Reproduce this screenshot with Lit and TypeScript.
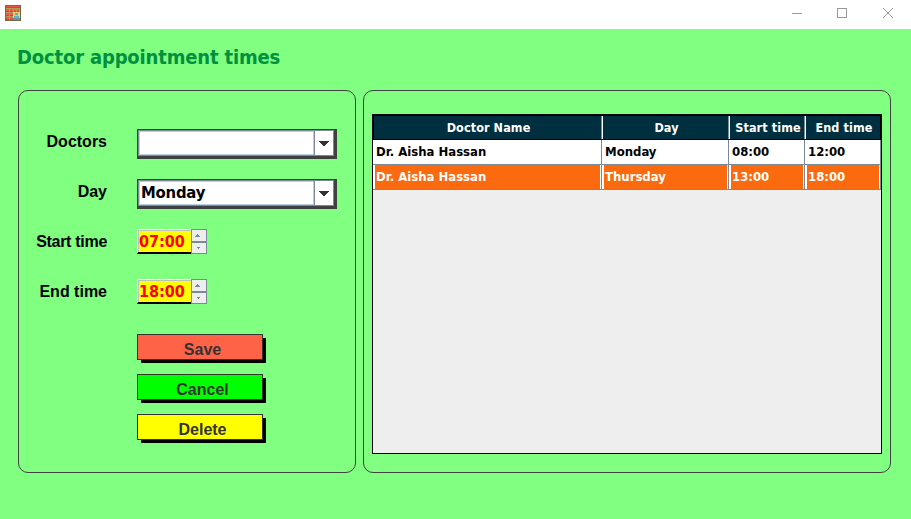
import { LitElement, html, css, svg } from "lit";
import { customElement, property } from "lit/decorators.js";
import { classMap } from "lit/directives/class-map.js";

@customElement("combo-box")
class ComboBox extends LitElement {
  @property() value = "";
  static styles = css`
    :host { display: block; box-sizing: border-box; width: 200px; height: 30px; border: solid #404040; border-width: 1px 3px 3px 1px; }
    .box { box-sizing: border-box; height: 26px; border: 1px solid #7a8a99; display: grid; grid-template-columns: 175px 19px; background: #fff; }
    .value { box-sizing: border-box; height: 24px; border: 1px solid #b8cfe5; padding-left: 1px; font: bold 16.5px/22px "DejaVu Sans Condensed", "DejaVu Sans", sans-serif; font-stretch: condensed; color: #000; letter-spacing: -0.2px; }
    .drop { border-left: 1px solid #7a8a99; display: flex; align-items: center; justify-content: center; }
    svg { display: block; }
  `;
  render() {
    return html`<div class="box"><div class="value">${this.value}</div>
      <div class="drop"><svg width="10" height="5" shape-rendering="crispEdges"><path d="M0 0H10V1H9V2H8V3H7V4H6V5H4V4H3V3H2V2H1V1H0Z" fill="#333" /></svg></div></div>`;
  }
}

@customElement("time-spinner")
class TimeSpinner extends LitElement {
  @property() value = "";
  static styles = css`
    :host { display: grid; grid-template-columns: 54px 16px; width: 70px; height: 25px; }
    .field { box-sizing: border-box; height: 25px; border-top: 1px solid #fff; border-left: 1px solid #fff; border-bottom: 2px solid #000; background: #ff0; }
    .text { box-sizing: border-box; height: 22px; border-top: 1px solid #c0c0c0; border-left: 1px solid #c0c0c0; font: bold 16px/21px "DejaVu Sans Condensed", "DejaVu Sans", sans-serif; font-stretch: condensed; color: #f00; white-space: nowrap; }
    .steps { display: grid; grid-template-rows: 13px 12px; }
    .step { box-sizing: border-box; border: 1px solid #7a8a99; background: #eee; display: flex; align-items: center; padding-left: 3px; }
    svg { display: block; }
  `;
  render() {
    return html`<div class="field"><div class="text">${this.value}</div></div>
      <div class="steps">
        <div class="step"><svg width="5" height="3" shape-rendering="crispEdges"><path d="M2 0H3V1H4V2H5V3H0V2H1V1H2Z" fill="#7a8a99" /></svg></div>
        <div class="step"><svg width="5" height="2" shape-rendering="crispEdges"><path d="M2 0H5V1H4V2H3V1H2Z" fill="#7a8a99" /></svg></div>
      </div>`;
  }
}

const rows = [
  ["Dr. Aisha Hassan", "Monday", "08:00", "12:00"],
  ["Dr. Aisha Hassan", "Thursday", "13:00", "18:00"],
];
const headings = ["Doctor Name", "Day", "Start time", "End time"];
const windows = [
  [1, 4], [5, 4], [9, 4], [12, 4],
  [1, 8], [5, 8],
  [1, 12], [5, 12],
];

@customElement("app-root")
class AppRoot extends LitElement {
  static styles = css`
    :host { display: block; width: 911px; height: 519px; overflow: hidden; background: #80ff80; color: #000; }
    .bar { height: 29px; background: #fff; display: flex; align-items: flex-start; justify-content: space-between; }
    .logo { display: block; margin: 5px 0 0 5px; }
    .controls { display: block; margin: 8px 18px 0 0; }
    .title { height: 61px; box-sizing: border-box; padding: 14px 0 0 17px; font: bold 20px/28px "DejaVu Sans Condensed", "DejaVu Sans", sans-serif; font-stretch: condensed; color: #009040; white-space: nowrap; letter-spacing: -0.16px; }
    .panels { display: grid; grid-template-columns: 338px 528px; gap: 7px; margin-left: 18px; height: 383px; }
    .panel { box-sizing: border-box; border: 1px solid #404040; border-radius: 10px; }
    .form { padding-top: 38px; display: grid; grid-template-columns: 88px 200px; column-gap: 30px; grid-template-rows: repeat(4, 50px) auto; align-items: start; }
    .label { font: bold 16px/26px "Liberation Sans", Arial, sans-serif; text-align: right; white-space: nowrap; }
    .label.tight { letter-spacing: -0.3px; }
    .actions { grid-column: 2; padding-top: 5px; display: grid; gap: 11px; }
    .shadow { width: 129px; height: 29px; background: linear-gradient(#000, #000) 4px 4px / 125px 25px no-repeat; }
    .button { box-sizing: border-box; width: 126px; height: 26px; border: 1px solid #333; padding-left: 5px; text-align: center; font: bold 16px/29px "Liberation Sans", Arial, sans-serif; color: #333; }
    .save { background: #ff6347; }
    .cancel { background: #0f0; }
    .delete { background: #ff0; }
    .list { padding: 23px 0 0 8px; }
    .table { box-sizing: border-box; width: 510px; height: 340px; border: 1px solid #000; background: #eee; font: bold 13px/24px "DejaVu Sans Condensed", "DejaVu Sans", sans-serif; font-stretch: condensed; white-space: nowrap; }
    .row { display: grid; grid-template-columns: 229px 127px 76px 76px; }
    .head { box-sizing: border-box; height: 25px; border: solid #000; border-width: 1px; grid-template-columns: 228px 127px 76px 75px; background: #003040; color: #fff; font-size: 12.5px; line-height: 24px; letter-spacing: 0.1px; text-align: center; }
    .hcell { height: 23px; box-sizing: border-box; padding-left: 2px; }
    .hcell + .hcell { border-left: 1px solid #fff; }
    .hcell:not(:last-child) { border-right: 1px solid #7a8a99; }
    .cell { box-sizing: border-box; height: 25px; border: solid #7a8a99; border-width: 0 1px 1px 0; background: #fff; padding: 0 1px 0 2px; }
    .fill { height: 24px; padding-left: 1px; }
    .selected .fill { background: #fb6a0e; color: #fff; }
  `;

  render() {
    return html`
      <div class="bar">
        <svg class="logo" width="16" height="16" shape-rendering="crispEdges">
          <rect width="16" height="16" fill="#786743" />
          <rect x="1" y="1" width="14" height="1" fill="#ef5545" />
          <rect x="1" y="2" width="14" height="1" fill="#a05a40" />
          <rect x="1" y="3" width="14" height="12" fill="#b39a58" />
          ${windows.map(([x, y]) => svg`<rect x=${x} y=${y} width=${x > 8 ? 2 : 3} height="2" fill="#ef5b48" /><rect x=${x} y=${y + 2} width=${x > 8 ? 2 : 3} height="1" fill="#a8553c" />`)}
          <rect x="8" y="7" width="7" height="8" fill="#f0ce70" />
          <rect x="10" y="8" width="3" height="2" fill="#62a9bd" />
          <rect x="10" y="10" width="3" height="1" fill="#b8c4b6" />
          <rect x="9" y="11" width="5" height="2" fill="#6dafbe" />
          <rect x="8" y="13" width="7" height="2" fill="#4e9db4" />
        </svg>
        <svg class="controls" width="101" height="11" fill="none" stroke="#999">
          <path d="M0 5.5H10M45.5 .5H54.5V9.5H45.5Z" shape-rendering="crispEdges" />
          <path d="M91 0L101 10M101 0L91 10" />
        </svg>
      </div>
      <div class="title">Doctor appointment times</div>
      <div class="panels">
        <div class="panel form">
          <div class="label">Doctors</div><combo-box></combo-box>
          <div class="label">Day</div><combo-box value="Monday"></combo-box>
          <div class="label tight">Start time</div><time-spinner value="07:00"></time-spinner>
          <div class="label">End time</div><time-spinner value="18:00"></time-spinner>
          <div class="actions">
            ${["Save", "Cancel", "Delete"].map((name) => html`<div class="shadow"><div class="button ${name.toLowerCase()}">${name}</div></div>`)}
          </div>
        </div>
        <div class="panel list">
          <div class="table">
            <div class="row head">${headings.map((t) => html`<div class="hcell">${t}</div>`)}</div>
            ${rows.map((r, i) => html`<div class=${classMap({ row: true, selected: i === 1 })}>
              ${r.map((t) => html`<div class="cell"><div class="fill">${t}</div></div>`)}
            </div>`)}
          </div>
        </div>
      </div>
    `;
  }
}
